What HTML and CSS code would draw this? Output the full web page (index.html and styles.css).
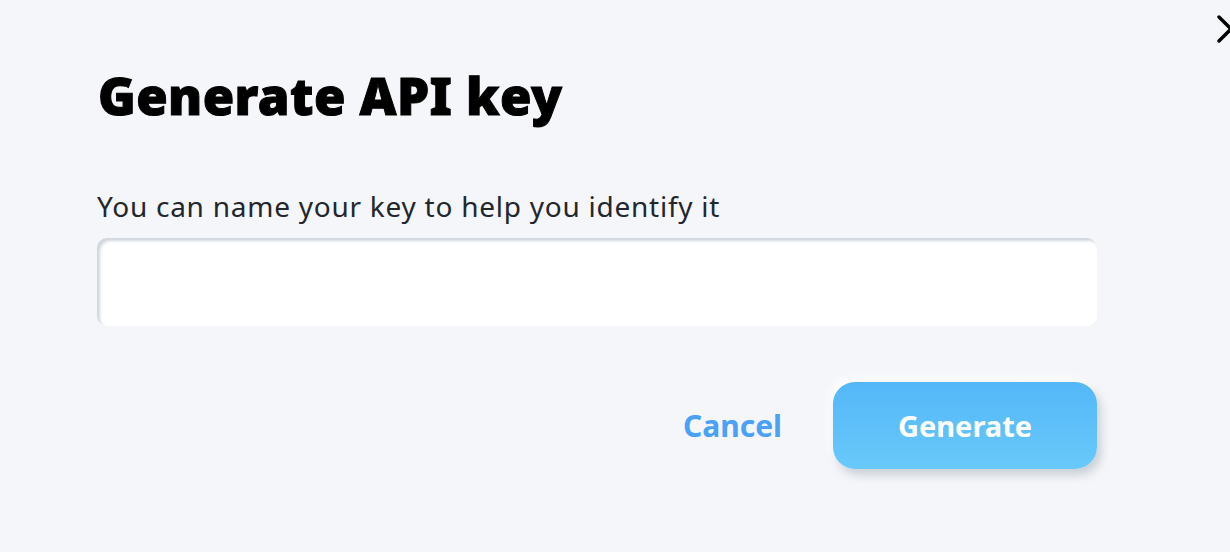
FILE: index.html
```html
<!DOCTYPE html>
<html>
<head>
<meta charset="utf-8">
<link rel="stylesheet" href="styles.css">
</head>
<body>
<div class="modal">
  <button class="close" aria-label="Close">
    <svg width="30" height="30" viewBox="0 0 30 30"><path d="M3 3 L27 27 M27 3 L3 27" stroke="#000" stroke-width="3.4" stroke-linecap="round" fill="none"/></svg>
  </button>
  <h1 class="title">Generate API key</h1>
  <label class="label" for="keyname">You can name your key to help you identify it</label>
  <input class="input" id="keyname" type="text">
  <div class="actions">
    <button class="cancel">Cancel</button>
    <button class="generate">Generate</button>
  </div>
</div>
</body>
</html>
```

FILE: styles.css
```css
html, body {
  margin: 0;
  padding: 0;
  background: #f5f6fa;
  width: 1230px;
  height: 552px;
  overflow: hidden;
}
.modal {
  position: relative;
  padding: 62px 133px 0 97px;
  display: flex;
  flex-direction: column;
  font-family: "Noto Sans", "Open Sans", sans-serif;
}
.close {
  position: absolute;
  top: 14px;
  left: 1216px;
  border: 0;
  background: none;
  padding: 0;
  width: 30px;
  height: 30px;
}
.title {
  margin: 0 0 0 1px;
  font-family: "Noto Sans", sans-serif;
  font-weight: 900;
  font-size: 51px;
  line-height: 66px;
  letter-spacing: 0.4px;
  -webkit-text-stroke: 1px #000;
  color: #000;
}
.label {
  margin-top: 60px;
  font-size: 28px;
  line-height: 36px;
  color: #22272e;
  letter-spacing: 0.75px;
}
.input {
  margin-top: 14px;
  height: 88px;
  box-sizing: border-box;
  border: 0;
  border-radius: 10px;
  background: #fff;
  box-shadow: inset 3px 3px 3px rgba(150, 165, 180, 0.45);
  outline: none;
  font-size: 24px;
  padding: 0 20px;
}
.actions {
  margin-top: 56px;
  display: flex;
  justify-content: flex-end;
  align-items: center;
  gap: 51px;
}
.cancel {
  border: 0;
  background: none;
  padding: 0;
  font-family: "Noto Sans", sans-serif;
  font-weight: 700;
  font-size: 30px;
  color: #4aa1f6;
  letter-spacing: 0;
}
.generate {
  width: 264px;
  height: 87px;
  border: 0;
  border-radius: 22px;
  background: linear-gradient(180deg, #54b7f8 0%, #69c9fa 100%);
  box-shadow: 4px 6px 10px rgba(120, 135, 150, 0.35), -4px -4px 10px rgba(255,255,255,0.9);
  color: #fff;
  font-family: "Noto Sans", sans-serif;
  font-weight: 700;
  font-size: 29px;
  letter-spacing: 0;
}
```
